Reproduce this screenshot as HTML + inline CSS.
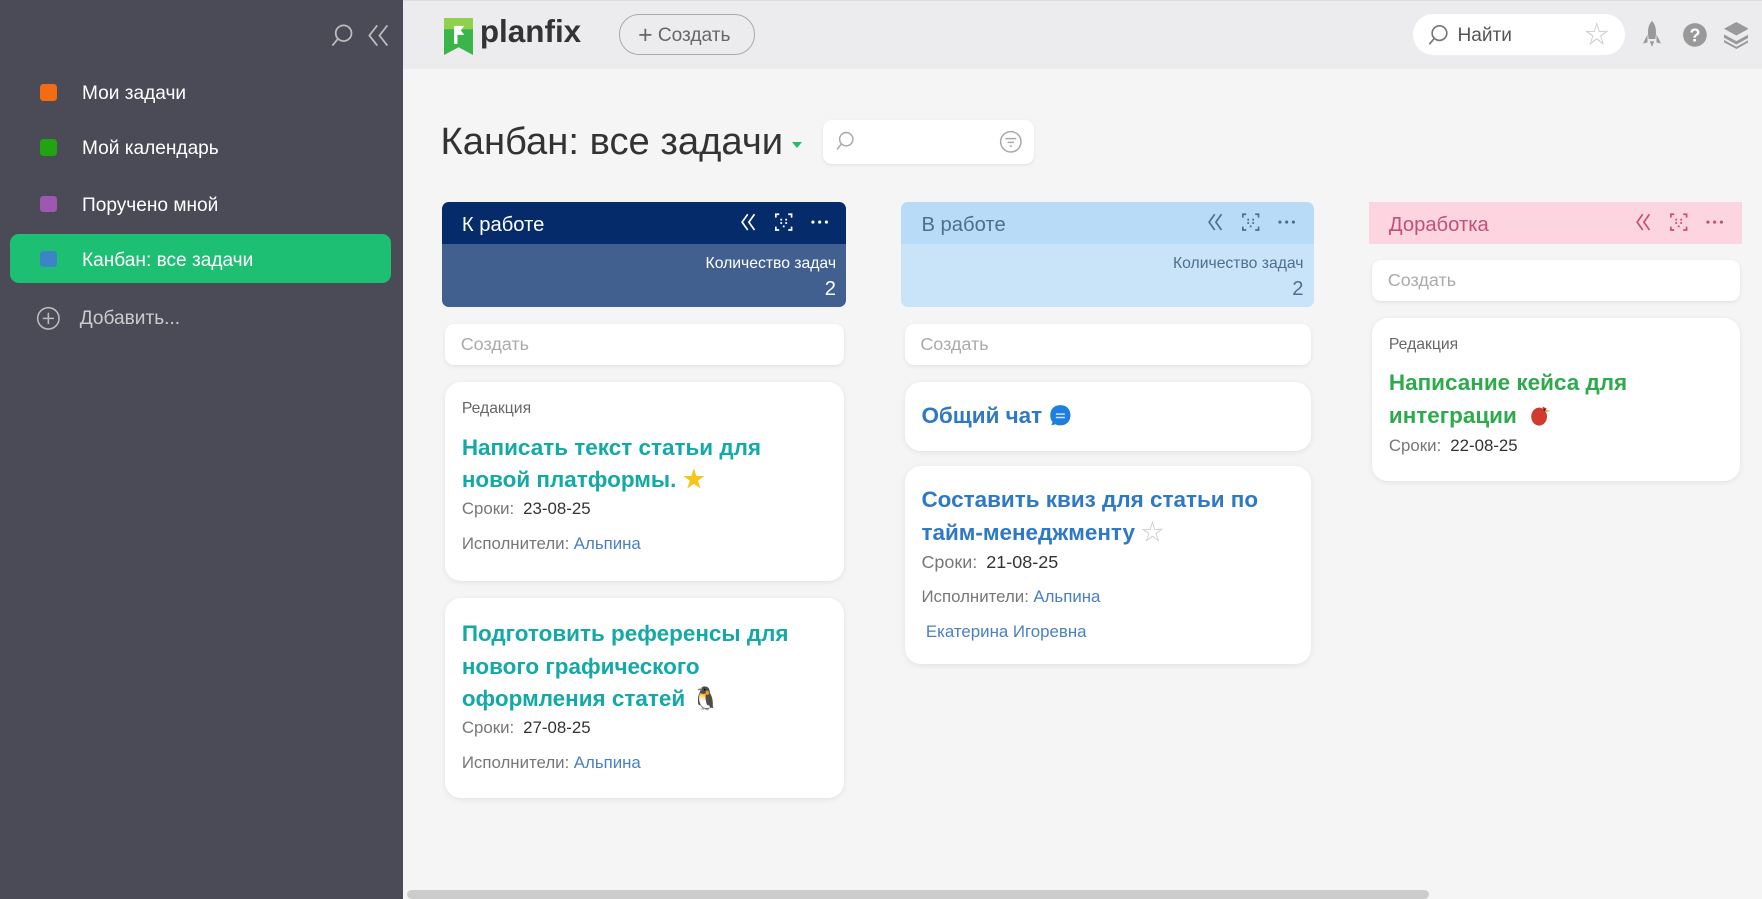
<!DOCTYPE html>
<html><head><meta charset="utf-8"><style>
*{margin:0;padding:0;box-sizing:border-box}
html,body{width:1762px;height:899px;overflow:hidden;background:#f5f5f5}
#w{zoom:1.12372;width:1568px;height:800px;position:relative;font-family:"Liberation Sans","Noto Sans CJK SC",sans-serif;color:#333}
.a{position:absolute}
.side{left:0;top:0;width:359px;height:800px;background:#4a4b57}
.it{position:absolute;left:9px;width:339px;height:44px;border-radius:8px;color:#fff;font-size:17px;line-height:48px;padding-left:64px}
.it i{position:absolute;left:27px;top:15px;width:15px;height:15px;border-radius:3px}
.top{left:359px;top:0;width:1209px;height:61px;background:#ececee;border-top:1px solid #ddd}
.col{position:absolute;border-radius:6px;overflow:hidden}
.hd{height:37px;font-size:18px;line-height:41px;padding-left:18px;position:relative}
.ic{position:absolute;top:9px;right:14px}
.cnt{height:56px;text-align:right;padding:8px 9px 0 0;font-size:14px;line-height:20px}
.cnt b{font-weight:normal;font-size:18px;display:block;margin-top:2px}
.box{position:absolute;background:#fff;border-radius:8px;box-shadow:0 1px 4px rgba(0,0,0,.08);font-size:16px;color:#aaa;padding-left:14px;line-height:37px;height:37px}
.card{position:absolute;background:#fff;border-radius:14px;box-shadow:0 1px 5px rgba(0,0,0,.08);padding:16px 15px}
.cat{font-size:14px;color:#666;margin-bottom:12px}
.t{font-size:20px;font-weight:bold;line-height:29px}
.r{font-size:15px;color:#777;line-height:31px}
.t+.r{margin-top:-4px}
.r span{color:#333;margin-left:8px}
.r a{color:#4a7fc1;margin-left:4px}
</style></head><body><div id="w">
<svg width="0" height="0" style="position:absolute"><defs>
<g id="ic" stroke-width="1.5"><path fill="none" d="M6 2l-5 7 5 7M12 2l-5 7 5 7"/><path fill="none" d="M34 2h-3v3M42 2h3v3M34 16h-3v-3M42 16h3v-3"/><g stroke="none"><rect x="35" y="6" width="1.6" height="1.6"/><rect x="39.4" y="6" width="1.6" height="1.6"/><rect x="35" y="9" width="1.6" height="1.6"/><rect x="39.4" y="9" width="1.6" height="1.6"/><rect x="37.2" y="12" width="1.6" height="1.6"/><circle cx="64" cy="9" r="1.4"/><circle cx="70" cy="9" r="1.4"/><circle cx="76" cy="9" r="1.4"/></g></g></defs></svg>
<div class="a side">
 <svg class="a" style="left:293px;top:20px" width="24" height="24" viewBox="0 0 24 24" fill="none" stroke="#bbb" stroke-width="1.6"><circle cx="13" cy="10" r="7"/><path d="M8 15l-5 6"/></svg>
 <svg class="a" style="left:326px;top:20px" width="24" height="24" viewBox="0 0 24 24" fill="none" stroke="#bbb" stroke-width="1.6"><path d="M10 3l-7 9 7 9M19 3l-7 9 7 9"/></svg>
 <div class="it" style="top:60px"><i style="background:#f36c12"></i>Мои задачи</div>
 <div class="it" style="top:109px"><i style="background:#22a312"></i>Мой календарь</div>
 <div class="it" style="top:159px"><i style="background:#9b59b0"></i>Поручено мной</div>
 <div class="it" style="top:208px;background:#1dbf73"><i style="background:#3c84c4"></i>Канбан: все задачи</div>
 <div class="it" style="top:260px;color:#ccc;padding-left:62px">
  <svg class="a" style="left:23px;top:12px" width="22" height="22" viewBox="0 0 22 22" fill="none" stroke="#bbb" stroke-width="1.4"><circle cx="11" cy="11" r="9.5"/><path d="M11 6v10M6 11h10"/></svg>Добавить...</div>
</div>
<div class="a top">
 <svg class="a" style="left:36px;top:15px" width="26" height="33" viewBox="0 0 26 33"><path d="M0 0h26v33l-13-7-13 7z" fill="#3bb54a"/><path d="M0 0h26v10H0z" fill="#8fd14f"/><path d="M9 7h9l-3 4 3 4h-6v8H9z" fill="#fff"/></svg>
 <div class="a" style="left:68px;top:12px;font-size:28px;font-weight:bold;color:#333">planfix</div>
 <div class="a" style="left:192px;top:12px;width:121px;height:36px;border:1px solid #aaa;border-radius:18px;font-size:17px;color:#666;line-height:38px;padding-left:16px"><span style="font-size:22px;vertical-align:-2px">+</span> Создать</div>
 <div class="a" style="left:898px;top:12px;width:189px;height:36px;background:#fff;border-radius:18px;font-size:17px;color:#555;line-height:40px;padding-left:40px">Найти
  <svg class="a" style="left:12px;top:8px" width="22" height="22" viewBox="0 0 22 22" fill="none" stroke="#777" stroke-width="1.5"><circle cx="12" cy="9" r="6.5"/><path d="M7 14l-4 5"/></svg>
  <span class="a" style="right:14px;top:1px;color:#ccc;font-size:22px;line-height:36px">☆</span></div>
 <svg class="a" style="left:1103px;top:18px" width="16" height="25" viewBox="0 0 16 25" fill="#999"><path d="M8 0c4 4 4 10 3 16H5C4 10 4 4 8 0zM4 12l-4 8 4-1zM12 12l4 8-4-1zM6 18h4l-2 5z"/></svg>
 <svg class="a" style="left:1138px;top:19px" width="23" height="23" viewBox="0 0 24 24"><circle cx="12" cy="12" r="11" fill="#999"/><text x="12" y="18" font-size="17" font-weight="bold" text-anchor="middle" fill="#fff" font-family="Liberation Sans">?</text></svg>
 <svg class="a" style="left:1175px;top:19px" width="22" height="24" viewBox="0 0 22 24" fill="#999"><path d="M11 0l11 6-11 6L0 6z"/><path d="M0 11l11 6 11-6v3l-11 6-11-6z"/><path d="M0 16l11 6 11-6v2l-11 6-11-6z"/></svg>
</div>
<div class="a" style="left:392px;top:107px;font-size:34px;color:#333">Канбан: все задачи</div>
<div class="a" style="left:705px;top:126px;border:5px solid transparent;border-top:6px solid #1dbf73"></div>
<div class="a" style="left:732px;top:107px;width:188px;height:39px;background:#fff;border-radius:8px;box-shadow:0 1px 3px rgba(0,0,0,.08)">
 <svg class="a" style="left:10px;top:9px" width="20" height="20" viewBox="0 0 22 22" fill="none" stroke="#aaa" stroke-width="1.5"><circle cx="12" cy="9" r="6.5"/><path d="M7 14l-4 5"/></svg>
 <svg class="a" style="left:157px;top:9px" width="21" height="21" viewBox="0 0 22 22" fill="none" stroke="#aaa" stroke-width="1.4"><circle cx="11" cy="11" r="9.5"/><path d="M6 8h10M8 11.5h6M10 15h2"/></svg>
</div>

<div class="col" style="left:393px;top:180px;width:360px">
 <div class="hd" style="background:#062b6b;color:#fff">К работе<svg class="ic" width="80" height="19" stroke="#fff" fill="#fff"><use href="#ic"/></svg></div>
 <div class="cnt" style="background:#42608f;color:#fff">Количество задач<b>2</b></div>
</div>
<div class="box" style="left:396px;top:288px;width:355px">Создать</div>
<div class="card" style="left:396px;top:340px;width:355px;height:177px">
 <div class="cat">Редакция</div>
 <div class="t" style="color:#13a9a6">Написать текст статьи для новой платформы. <span style="color:#f5c518">★</span></div>
 <div class="r">Сроки:<span>23-08-25</span></div>
 <div class="r">Исполнители:<a>Альпина</a></div>
</div>
<div class="card" style="left:396px;top:532px;width:355px;height:178px;padding-top:18px">
 <div class="t" style="color:#13a9a6">Подготовить референсы для нового графического оформления статей 🐧</div>
 <div class="r">Сроки:<span>27-08-25</span></div>
 <div class="r">Исполнители:<a>Альпина</a></div>
</div>

<div class="col" style="left:802px;top:180px;width:367px">
 <div class="hd" style="background:#b8dcf8;color:#4d6f8f">В работе<svg class="ic" width="80" height="19" stroke="#4d6f8f" fill="#4d6f8f"><use href="#ic"/></svg></div>
 <div class="cnt" style="background:#c9e3f9;color:#4d6f8f">Количество задач<b>2</b></div>
</div>
<div class="box" style="left:805px;top:288px;width:362px">Создать</div>
<div class="card" style="left:805px;top:340px;width:362px;height:61px;padding-top:16px">
 <div class="t" style="color:#2f78c4">Общий чат <svg width="22" height="20" viewBox="0 0 22 20" style="vertical-align:-3px"><path d="M11 1C5 1 2 5 2 10c0 3 1 5 2 6l-1 3 4-1c1 1 3 1 4 1 6 0 9-4 9-9S17 1 11 1z" fill="#1e7fe0"/><path d="M7 9h8M7 12h8" stroke="#cfe6ff" stroke-width="1.3"/></svg></div>
</div>
<div class="card" style="left:805px;top:415px;width:362px;height:176px;padding-top:16px">
 <div class="t" style="color:#2f78c4">Составить квиз для статьи по тайм-менеджменту <span style="color:#ccc;font-weight:normal">☆</span></div>
 <div class="r" style="font-size:16px">Сроки:<span>21-08-25</span></div>
 <div class="r">Исполнители:<a>Альпина</a></div>
 <div class="r"><a>Екатерина Игоревна</a></div>
</div>

<div class="col" style="left:1218px;top:180px;width:332px;border-radius:0">
 <div class="hd" style="background:#fcd5e1;color:#c25079">Доработка<svg class="ic" width="80" height="19" stroke="#c25079" fill="#c25079"><use href="#ic"/></svg></div>
</div>
<div class="box" style="left:1221px;top:231px;width:327px">Создать</div>
<div class="card" style="left:1221px;top:283px;width:327px;height:145px">
 <div class="cat">Редакция</div>
 <div class="t" style="color:#2eaa4c">Написание кейса для интеграции&nbsp; <svg width="20" height="24" viewBox="0 0 20 24" style="vertical-align:-5px"><ellipse cx="9" cy="13" rx="7" ry="8" fill="#d23a2e"/><path d="M12 4l4 2-3 2z" fill="#c0302a"/><path d="M15 7l4 1-4 1z" fill="#f0a020"/><circle cx="14" cy="7" r=".9" fill="#222"/></svg></div>
 <div class="r" style="line-height:24px;margin-top:0">Сроки:<span>22-08-25</span></div>
</div>
<div class="a" style="left:362px;top:792px;width:910px;height:8px;background:#ccc;border-radius:4px"></div>
</div></body></html>
